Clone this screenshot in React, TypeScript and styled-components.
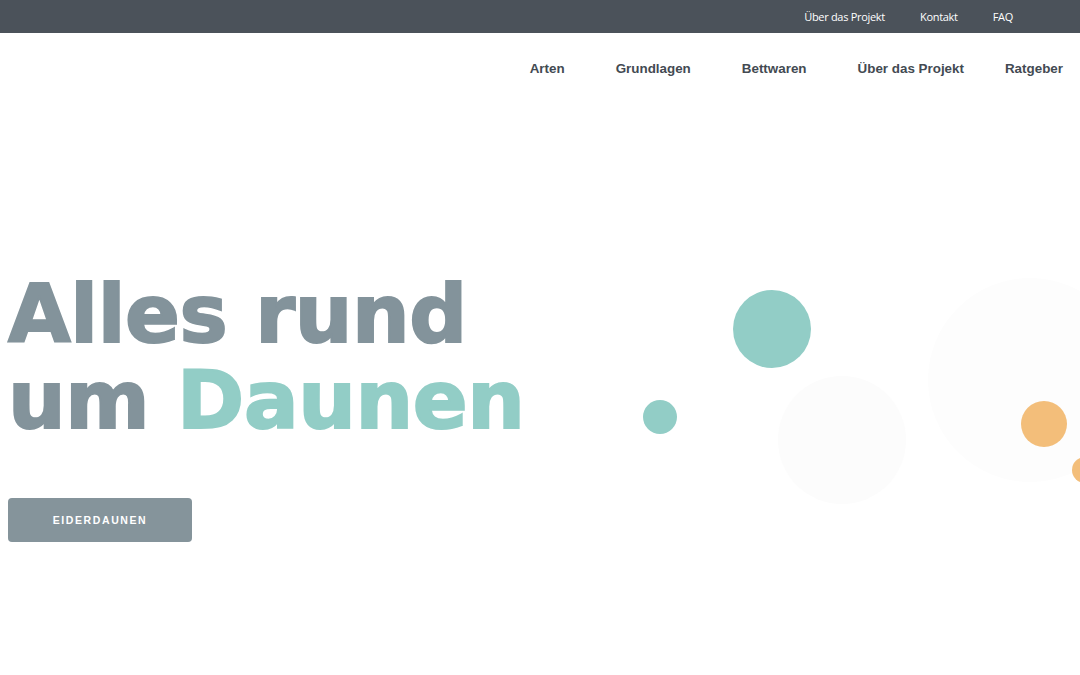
import styled, { createGlobalStyle } from "styled-components";

const GlobalStyle = createGlobalStyle`
  html, body {
    margin: 0;
    padding: 0;
    background: #ffffff;
  }
  * {
    box-sizing: border-box;
  }
`;

const Page = styled.div`
  width: 100%;
  min-height: 675px;
  font-family: "Liberation Sans", Arial, sans-serif;
  overflow: hidden;
`;

const TopBar = styled.div`
  height: 33px;
  background-color: #4b525a;
  display: flex;
  justify-content: flex-end;
  align-items: center;
  gap: 35px;
  padding-right: 67px;
`;

const TopLink = styled.a`
  font-family: "Open Sans", sans-serif;
  font-size: 11px;
  color: #ffffff;
  text-decoration: none;
  letter-spacing: -0.3px;
`;

const MainNav = styled.nav`
  height: 70px;
  display: flex;
  justify-content: flex-end;
  align-items: center;
  padding-right: 17px;
`;

const NavLink = styled.a<{ $last?: boolean }>`
  font-size: 13.4px;
  font-weight: 700;
  color: #434a52;
  text-decoration: none;
  margin-left: ${props => (props.$last ? "41px" : "51px")};
`;

const Hero = styled.section`
  position: relative;
  height: 572px;
  padding: 168px 0 0 8px;
`;

const Headline = styled.h1`
  margin: 0;
  font-family: "DejaVu Sans", sans-serif;
  font-weight: 700;
  font-size: 81px;
  line-height: 86px;
  letter-spacing: -0.4px;
  color: #83939b;
  -webkit-text-stroke: 2px currentColor;
  position: relative;
  z-index: 1;
`;

const Accent = styled.span`
  color: #92cdc6;
`;

const CtaButton = styled.button`
  margin-top: 55px;
  width: 184px;
  height: 44px;
  border: none;
  border-radius: 4px;
  background-color: #85949b;
  color: #ffffff;
  font-family: "Liberation Sans", Arial, sans-serif;
  font-size: 10.5px;
  font-weight: 700;
  letter-spacing: 1.6px;
  cursor: pointer;
  position: relative;
  z-index: 1;
`;

const Decoration = styled.svg`
  position: absolute;
  left: 0;
  top: 0;
  width: 1080px;
  height: 572px;
  pointer-events: none;
`;

// hero circles, coordinates relative to the hero section (top = 103px on page)
const Bubbles = () => (
  <Decoration viewBox="0 0 1080 572">
    <circle cx="1030" cy="277" r="102" fill="#fdfdfd" />
    <circle cx="842" cy="337" r="64" fill="#fcfcfc" />
    <circle cx="772" cy="226" r="39" fill="#92cdc6" />
    <circle cx="660" cy="314" r="17" fill="#92cdc6" />
    <circle cx="1044" cy="321" r="23" fill="#f3be7a" />
    <circle cx="1085" cy="367" r="13" fill="#f3be7a" />
  </Decoration>
);

const App = () => {
  return (
    <>
      <GlobalStyle />
      <Page>
        <TopBar>
          <TopLink href="#">Über das Projekt</TopLink>
          <TopLink href="#">Kontakt</TopLink>
          <TopLink href="#">FAQ</TopLink>
        </TopBar>
        <MainNav>
          <NavLink href="#">Arten</NavLink>
          <NavLink href="#">Grundlagen</NavLink>
          <NavLink href="#">Bettwaren</NavLink>
          <NavLink href="#">Über das Projekt</NavLink>
          <NavLink href="#" $last>Ratgeber</NavLink>
        </MainNav>
        <Hero>
          <Bubbles />
          <Headline>
            Alles rund
            <br />
            um <Accent>Daunen</Accent>
          </Headline>
          <CtaButton>EIDERDAUNEN</CtaButton>
        </Hero>
      </Page>
    </>
  );
};

export default App;
